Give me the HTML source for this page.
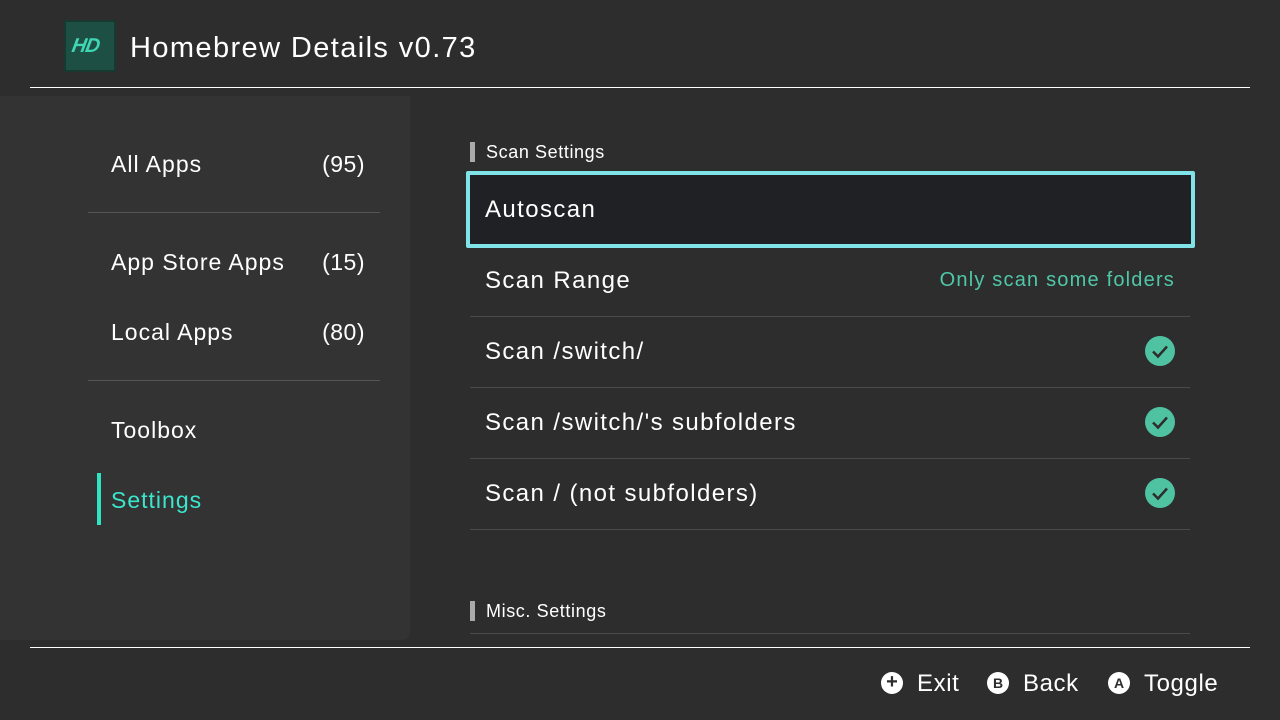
<!DOCTYPE html>
<html><head><style>
*{margin:0;padding:0;box-sizing:border-box}
body{width:1280px;height:720px;background:#2d2d2d;font-family:"Liberation Sans",sans-serif;color:#fff;position:relative;overflow:hidden}
.abs{position:absolute}
.logo{left:64px;top:20px;width:52px;height:52px;background:#1e4f45;border:2px solid #17392f}
.logo span{position:absolute;left:6px;top:13px;font:italic bold 20px "Liberation Sans",sans-serif;color:#3fd6b4;letter-spacing:-1px;transform:skewX(-10deg)}
.title{left:130px;top:32px;font-size:29px;letter-spacing:1.4px}
.hr{left:30px;width:1220px;height:1px;background:#fff}
.side{left:0;top:96px;width:410px;height:544px;background:#333;border-radius:0 0 8px 0}
.si{position:absolute;left:111px;font-size:23px;letter-spacing:1px}
.cnt{position:absolute;right:45px;font-size:23px;letter-spacing:0.5px}
.sep{position:absolute;left:88px;width:292px;height:1px;background:#555}
.row{position:absolute;left:470px;width:720px;height:71px;border-bottom:1px solid #4a4a4a}
.row .t{position:absolute;left:15px;top:21px;font-size:24px;letter-spacing:1.4px}
.chk{position:absolute;right:15px;top:19px;width:30px;height:30px;border-radius:50%;background:#4fc3a1}
.hdr{position:absolute;left:470px;font-size:18px;padding-left:11px;border-left:5px solid #aaa;line-height:20px;letter-spacing:0.6px}
.btn{position:absolute;top:672px;width:22px;height:22px;border-radius:50%;background:#fff;color:#2d2d2d;font:bold 14px "Liberation Sans",sans-serif;text-align:center;line-height:22px}
.bl{position:absolute;top:670px;font-size:24px;letter-spacing:0.6px}
</style></head><body>
<div class="abs logo"><span>HD</span></div>
<div class="abs title">Homebrew Details v0.73</div>
<div class="abs hr" style="top:87px"></div>
<div class="abs side">
<div class="si" style="top:55px">All Apps</div><div class="cnt" style="top:55px">(95)</div>
<div class="sep" style="top:116px"></div>
<div class="si" style="top:153px">App Store Apps</div><div class="cnt" style="top:153px">(15)</div>
<div class="si" style="top:223px">Local Apps</div><div class="cnt" style="top:223px">(80)</div>
<div class="sep" style="top:284px"></div>
<div class="si" style="top:321px">Toolbox</div>
<div style="position:absolute;left:97px;top:377px;width:4px;height:52px;background:#2fe3c4"></div>
<div class="si" style="top:391px;color:#3be6cd">Settings</div>
</div>
<div class="hdr" style="top:142px">Scan Settings</div>
<div class="abs" style="left:466px;top:171px;width:729px;height:77px;background:#1f2125;border:4px solid #7fe3e8;border-radius:2px"></div>
<div class="abs" style="left:485px;top:196px;font-size:24px;letter-spacing:1.4px">Autoscan</div>
<div class="row" style="top:246px"><div class="t">Scan Range</div><div style="position:absolute;right:15px;top:23px;font-size:20px;color:#4fc8a8;letter-spacing:1.2px">Only scan some folders</div></div>
<div class="row" style="top:317px"><div class="t">Scan /switch/</div><div class="chk"><svg width="30" height="30"><path d="M8 15.5l5 5 9-10" stroke="#2d2d2d" stroke-width="2.5" fill="none"/></svg></div></div>
<div class="row" style="top:388px"><div class="t">Scan /switch/'s subfolders</div><div class="chk"><svg width="30" height="30"><path d="M8 15.5l5 5 9-10" stroke="#2d2d2d" stroke-width="2.5" fill="none"/></svg></div></div>
<div class="row" style="top:459px"><div class="t">Scan / (not subfolders)</div><div class="chk"><svg width="30" height="30"><path d="M8 15.5l5 5 9-10" stroke="#2d2d2d" stroke-width="2.5" fill="none"/></svg></div></div>
<div class="hdr" style="top:601px">Misc. Settings</div>
<div class="abs" style="left:470px;top:633px;width:720px;height:1px;background:#4a4a4a"></div>
<div class="abs hr" style="top:647px"></div>
<div class="btn" style="left:881px;font-size:20px;line-height:21px">+</div><div class="bl" style="left:917px">Exit</div>
<div class="btn" style="left:987px">B</div><div class="bl" style="left:1023px">Back</div>
<div class="btn" style="left:1108px">A</div><div class="bl" style="left:1144px">Toggle</div>
</body></html>
